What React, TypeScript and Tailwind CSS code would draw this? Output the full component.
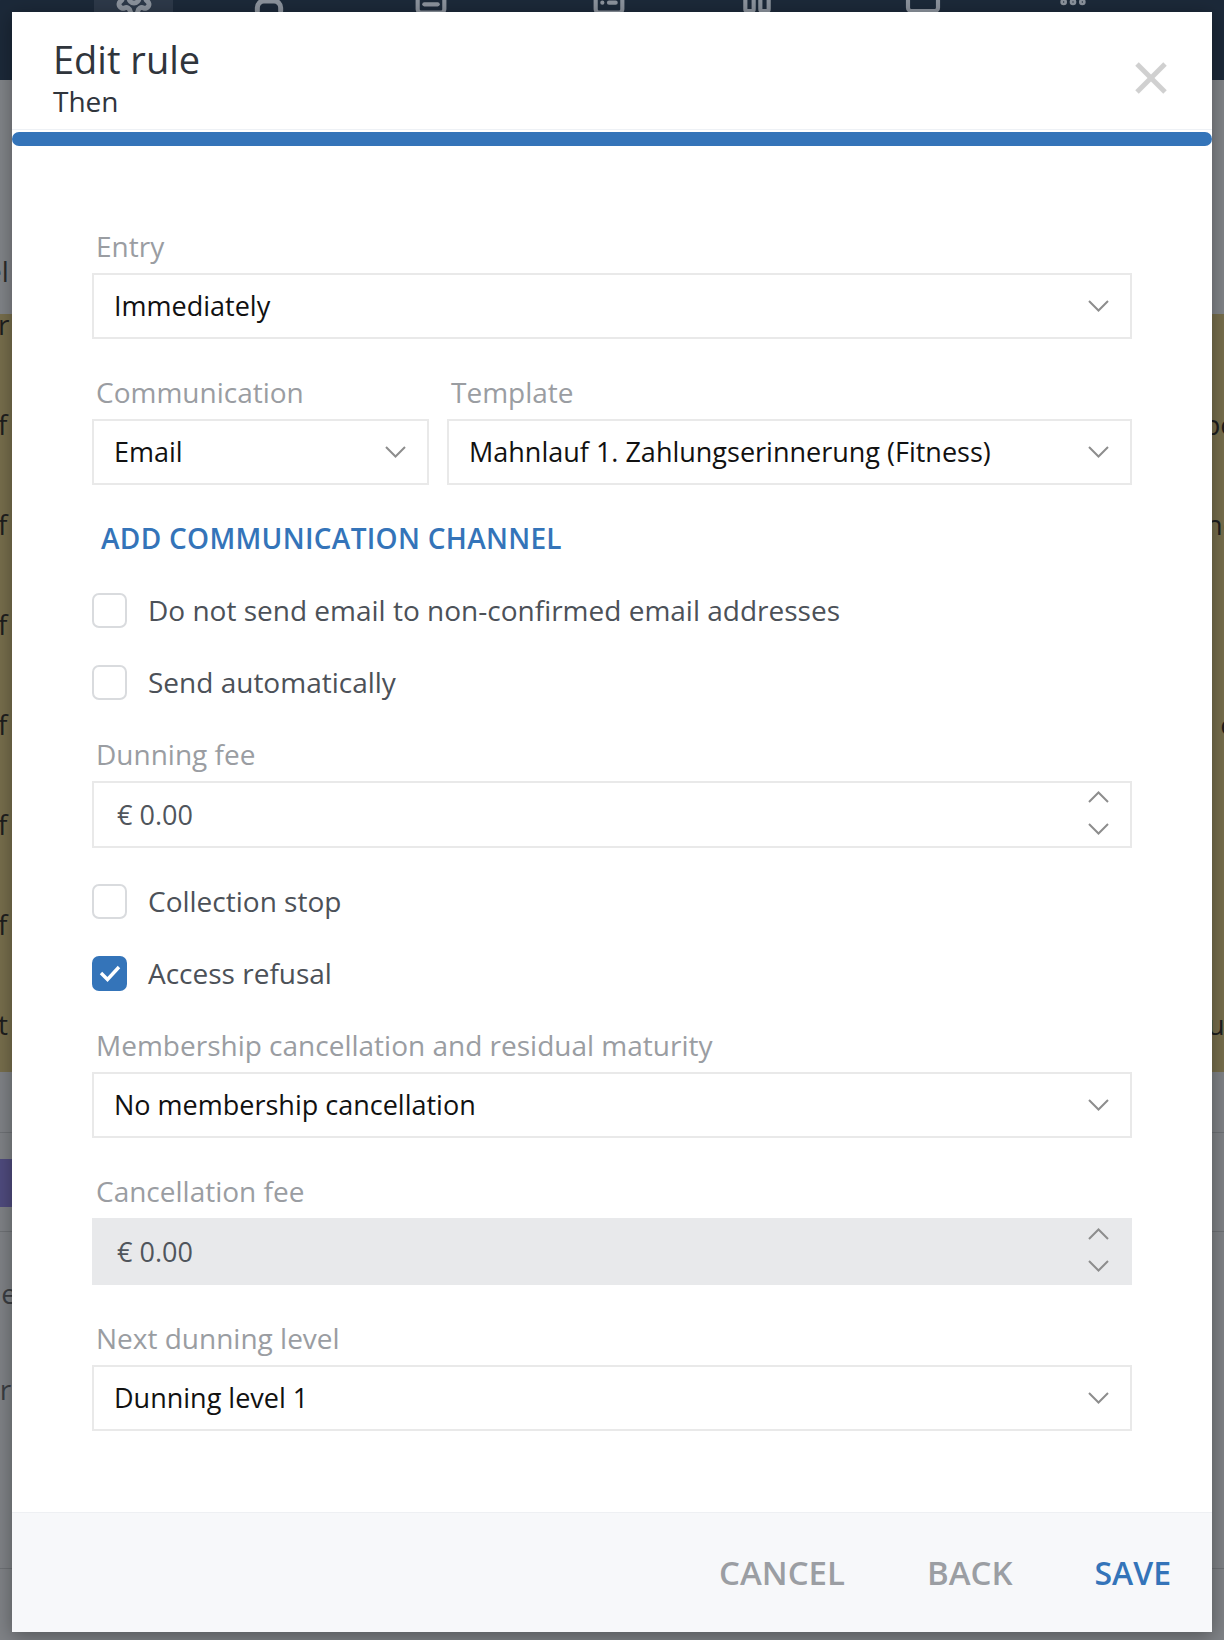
import React from "react";
import { Settings, User, FileText, ClipboardList, Pause, Square, MoreHorizontal } from "lucide-react";

function Chevron({ up = false }: { up?: boolean }) {
  return (
    <svg width="21" height="12" viewBox="0 0 21 12" fill="none">
      <polyline
        points={up ? "1,11 10.5,1.5 20,11" : "1,1 10.5,10.5 20,1"}
        stroke="#8d8d8d"
        strokeWidth="2"
        fill="none"
      />
    </svg>
  );
}

function Label({ children }: { children: React.ReactNode }) {
  return <div className="mb-2 pl-[4px] text-[28px] leading-[38px] text-[#9a9da2]">{children}</div>;
}

function Select({ value, className = "" }: { value: string; className?: string }) {
  return (
    <div
      className={
        "flex h-[66px] items-center justify-between border-2 border-[#e9e9e9] bg-white pl-[20px] pr-[21px] " +
        className
      }
    >
      <span className="text-[27px] leading-[38px] text-[#111111]">{value}</span>
      <Chevron />
    </div>
  );
}

function NumberInput({ disabled = false }: { disabled?: boolean }) {
  return (
    <div
      className={
        disabled
          ? "flex h-[67px] items-center justify-between border-2 border-[#e8e9eb] bg-[#e8e9eb] pl-[23px] pr-[21px]"
          : "flex h-[67px] items-center justify-between border-2 border-[#e9e9e9] bg-white pl-[23px] pr-[21px]"
      }
    >
      <span className="text-[27px] leading-[38px] text-[#50555c]">€ 0.00</span>
      <div className="-mt-[3px] flex flex-col gap-[20px]">
        <Chevron up />
        <Chevron />
      </div>
    </div>
  );
}

function Checkbox({ label, checked = false }: { label: string; checked?: boolean }) {
  return (
    <div className="flex h-[38px] items-center gap-[21px]">
      {checked ? (
        <div className="flex h-[35px] w-[35px] items-center justify-center rounded-[7px] bg-[#3474b9]">
          <svg width="24" height="20" viewBox="0 0 24 20" fill="none">
            <polyline points="3,10 9.5,16.5 21,4" stroke="#ffffff" strokeWidth="3.4" fill="none" />
          </svg>
        </div>
      ) : (
        <div className="h-[35px] w-[35px] rounded-[7px] border-2 border-[#d9dbde] bg-white" />
      )}
      <span className="text-[28px] leading-[38px] text-[#4c5158]">{label}</span>
    </div>
  );
}

function BgRow({ left, right }: { left: string; right: string }) {
  return (
    <div className="flex h-[100px] items-center justify-between">
      <span className="-ml-[2px]">{left}</span>
      <span className="-mr-[12px]">{right}</span>
    </div>
  );
}

export default function App() {
  return (
    <div className="relative h-[1640px] w-[1224px] overflow-hidden bg-[#7f8286] font-['Open_Sans','Noto_Sans',sans-serif]">
      {/* background page under overlay */}
      <div className="flex h-full flex-col">
        <div className="flex h-[80px] items-start bg-[#1c2939] text-[#8b929c]">
          <div className="ml-[94px] flex h-[40px] w-[79px] items-start justify-center bg-[#2d3949]">
            <Settings size={40} className="-mt-[22px]" strokeWidth={3} />
          </div>
          <div className="ml-[76px] -mt-[24px]"><User size={40} strokeWidth={3} /></div>
          <div className="ml-[122px] -mt-[24px]"><FileText size={40} strokeWidth={2.5} /></div>
          <div className="ml-[138px] -mt-[24px]"><ClipboardList size={40} strokeWidth={2.5} /></div>
          <div className="ml-[108px] -mt-[24px]"><Pause size={40} strokeWidth={2.5} /></div>
          <div className="ml-[126px] -mt-[24px]"><Square size={40} strokeWidth={2.5} /></div>
          <div className="ml-[114px] -mt-[14px]"><MoreHorizontal size={32} strokeWidth={3} /></div>
        </div>
        <div className="flex h-[234px] justify-between bg-[#818488] pt-[170px] text-[28px] text-[#2b2b2b]">
          <span className="-ml-[14px]">el</span>
        </div>
        <div className="h-[758px] overflow-hidden bg-[#776e4c] text-[28px] text-[#1e1e1e]">
          <div className="-mt-[40px] flex flex-col">
            <BgRow left="r" right="r" />
            <BgRow left="f" right="pe" />
            <BgRow left="f" right="nc" />
            <BgRow left="f" right="r" />
            <BgRow left="f" right="e" />
            <BgRow left="f" right="." />
            <BgRow left="f" right="" />
            <BgRow left="t" right="ur" />
          </div>
        </div>
        <div className="flex flex-1 flex-col bg-[#7f8286] text-[28px] text-[#3a3d42]">
          <div className="mt-[60px] h-px bg-[#6e7175]" />
          <div className="mt-[26px] h-[48px] w-[12px] bg-[#4f4b7e]" />
          <div className="mt-[24px] h-px bg-[#6e7175]" />
          <span className="-ml-[16px] mt-[42px] leading-[38px]">ne</span>
          <span className="-ml-[16px] mt-[58px] leading-[38px]">er</span>
          <span className="-ml-[16px] mt-[82px] leading-[38px]">a</span>
          <div className="mt-[40px] h-px bg-[#6e7175]" />
        </div>
      </div>

      {/* modal */}
      <div className="absolute left-[12px] top-[12px] flex w-[1200px] flex-col bg-white shadow-[0_4px_18px_rgba(0,0,0,0.35)]">
        <div className="flex items-center justify-between border-b border-[#eef1f5] pb-[9px] pl-[41px] pr-[45px] pt-[24px]">
          <div className="flex flex-col">
            <div className="text-[38px] leading-[46px] text-[#30353c]">Edit rule</div>
            <div className="text-[28px] leading-[38px] text-[#30353c]">Then</div>
          </div>
          <svg width="32" height="32" viewBox="0 0 32 32" fill="none">
            <line x1="2" y1="2" x2="30" y2="30" stroke="#d0d0d0" strokeWidth="5" />
            <line x1="30" y1="2" x2="2" y2="30" stroke="#d0d0d0" strokeWidth="5" />
          </svg>
        </div>
        <div className="mt-[2px] h-[14px] w-full rounded-full bg-[#3474b9]" />

        <div className="flex flex-col gap-[34px] px-[80px] pb-[81px] pt-[81px]">
          <div>
            <Label>Entry</Label>
            <Select value="Immediately" />
          </div>

          <div className="grid grid-cols-[337px_1fr] gap-x-[18px]">
            <div>
              <Label>Communication</Label>
              <Select value="Email" />
            </div>
            <div>
              <Label>Template</Label>
              <Select value="Mahnlauf 1. Zahlungserinnerung (Fitness)" />
            </div>
          </div>

          <div className="pl-[9px] text-[28px] font-semibold leading-[38px] tracking-[0.3px] text-[#3474b9]">
            ADD COMMUNICATION CHANNEL
          </div>

          <Checkbox label="Do not send email to non-confirmed email addresses" />
          <Checkbox label="Send automatically" />

          <div>
            <Label>Dunning fee</Label>
            <NumberInput />
          </div>

          <Checkbox label="Collection stop" />
          <Checkbox label="Access refusal" checked />

          <div>
            <Label>Membership cancellation and residual maturity</Label>
            <Select value="No membership cancellation" />
          </div>

          <div>
            <Label>Cancellation fee</Label>
            <NumberInput disabled />
          </div>

          <div>
            <Label>Next dunning level</Label>
            <Select value="Dunning level 1" />
          </div>
        </div>

        <div className="flex h-[120px] items-center justify-end gap-[82px] border-t border-[#eef0f3] bg-[#f7f8fa] pr-[41px]">
          <span className="text-[33px] font-semibold text-[#9b9ea3]">CANCEL</span>
          <span className="text-[33px] font-semibold text-[#9b9ea3]">BACK</span>
          <span className="text-[32px] font-semibold text-[#3474b9]">SAVE</span>
        </div>
      </div>
    </div>
  );
}
